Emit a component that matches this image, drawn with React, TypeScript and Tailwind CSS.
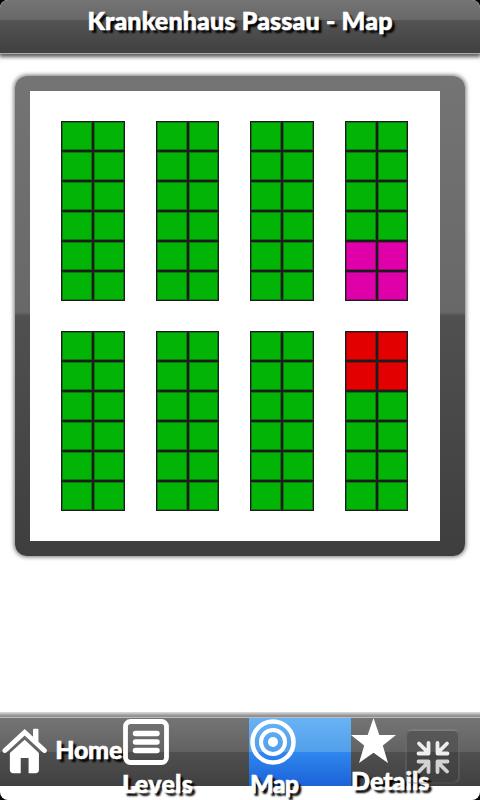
import React from "react";

const label =
  "font-['Lato',sans-serif] font-black text-white whitespace-nowrap [text-shadow:3px_3px_2px_#000] [-webkit-text-stroke:0.6px_#fff]";

const green = "bg-[#02b406]";
const pink = "bg-[#e000aa]";
const red = "bg-[#e20000]";

const plain = [green, green, green, green, green, green];
const blocks = [
  { width: "w-[64px]", rows: plain },
  { width: "w-[63px]", rows: plain },
  { width: "w-[64px]", rows: plain },
  { width: "w-[63px]", rows: [green, green, green, green, pink, pink] },
  { width: "w-[64px]", rows: plain },
  { width: "w-[63px]", rows: plain },
  { width: "w-[64px]", rows: plain },
  { width: "w-[63px]", rows: [red, red, green, green, green, green] },
];

function Block({ width, rows }: { width: string; rows: string[] }) {
  return (
    <div className={`grid h-[180px] grid-cols-2 grid-rows-6 ${width}`}>
      {rows.flatMap((color, i) =>
        [0, 1].map((side) => (
          <div
            key={`${i}-${side}`}
            className={`border border-[#1c1c1c] shadow-[inset_0_0_0_1px_rgba(28,28,28,0.4)] ${color}`}
          />
        ))
      )}
    </div>
  );
}

function HomeIcon() {
  return (
    <svg width="46" height="46" viewBox="0 0 46 46" fill="#fff">
      <path d="M3 22.500 23 4 43 22.500" fill="none" stroke="#fff" strokeWidth="5" strokeLinecap="round" />
      <path d="M31.500 1.500q0-1 1-1h3.500q1 0 1 1V14l-5.500-5zM8 25 23 11.500 37.500 25v17q0 3.500-3.500 3.500H27V30H19v15.500h-7.500Q8 45.500 8 42z" />
    </svg>
  );
}

function LevelsIcon() {
  return (
    <svg width="46" height="46" viewBox="0 0 46 46" fill="none" stroke="#fff" strokeLinecap="round">
      <rect x="2.500" y="2.500" width="41" height="41" rx="5" strokeWidth="4.800" />
      <path d="M12.500 14.500h21.500M12.500 23h21.500M12.500 31.500h21.500" strokeWidth="5.500" />
    </svg>
  );
}

function TargetIcon() {
  return (
    <svg width="46" height="46" viewBox="0 0 46 46" fill="none" stroke="#fff">
      <circle cx="23" cy="23" r="20.500" strokeWidth="4.500" />
      <circle cx="23" cy="23" r="12" strokeWidth="4" />
      <circle cx="23" cy="23" r="5" fill="#fff" stroke="none" />
    </svg>
  );
}

function StarIcon() {
  return (
    <svg width="46" height="46" viewBox="0 0 46 46" fill="#fff">
      <path d="m22.500 0 5.800 17H45L31.800 27.500 37 45 22.500 34.700 8 45 13.200 27.500 0 17h16.700z" />
    </svg>
  );
}

function ShrinkButton() {
  return (
    <div className="flex h-[55px] w-[55px] items-center justify-center rounded-[7px] border-2 border-white/10 bg-[linear-gradient(rgba(0,0,0,0.2),rgba(0,0,0,0.02))]">
      <svg width="34" height="34" viewBox="0 0 34 34" fill="none" strokeWidth="3.800" strokeLinejoin="round" strokeLinecap="round">
        <path d="M3 3.500 11.500 12M12.500 3v10.500H2.500M31 3.500 22.500 12M21.500 3v10.500h10" stroke="#eee" />
        <path d="M3 31.500 11.500 23M12.500 32V21.500H2.500M31 31.500 22.500 23M21.500 32V21.500h10" stroke="#d2d2d2" />
      </svg>
    </div>
  );
}

export default function App() {
  return (
    <div className="h-[800px] w-[480px] overflow-hidden bg-black">
      <div className="flex h-full flex-col overflow-hidden rounded-[8px] bg-white">
        <header className="flex h-[54px] shrink-0 justify-center border-b border-[#aaa] bg-[linear-gradient(#747474_0,#686868_20px,#545454_20px,#404040_53px)] shadow-[0_2px_4px_1px_rgba(0,0,0,0.65)]">
          <h1 className={`h-[40px] text-[25px] leading-[40px] tracking-[0.16px] ${label}`}>
            Krankenhaus Passau - Map
          </h1>
        </header>

        <main className="h-[658px] shrink-0 pl-[15px] pt-[22px]">
          <div className="h-[480px] w-[450px] rounded-[12px] bg-[linear-gradient(#747474_0,#686868_236px,#505050_240px,#3e3e3e_480px)] p-[15px] pr-[25px] shadow-[0_0_4px_1px_rgba(0,0,0,0.55)]">
            <div className="grid h-[450px] w-[410px] grid-cols-[95px_94px_95px_63px] content-start gap-y-[30px] bg-white pl-[31px] pt-[30px]">
              {blocks.map((block, i) => (
                <Block key={i} {...block} />
              ))}
            </div>
          </div>
        </main>

        <div className="h-[5px] shrink-0 bg-[linear-gradient(#ddd_0,#8c8c8c_4px,#999_5px)]" />
        <footer className="flex h-[69px] shrink-0 border-t border-[#bbb] bg-[linear-gradient(#747474_0,#626262_34px,#505050_34px,#404040_68px)]">
          <div className="flex w-[122px] gap-[8px] pl-[2px] pt-[10px]">
            <HomeIcon />
            <span className={`text-[25px] leading-[43px] tracking-[-0.3px] ${label}`}>Home</span>
          </div>
          <div className="w-[127px] pt-[1px]">
            <div className="pl-[1px]">
              <LevelsIcon />
            </div>
            <div className={`text-[25px] leading-[36px] tracking-[0.3px] ${label}`}>Levels</div>
          </div>
          <div className="w-[102px] bg-[linear-gradient(#69b2f4_0,#519feb_34px,#3087ee_34px,#1c62d9_68px)] pl-[1px] pt-[1px]">
            <TargetIcon />
            <div className={`text-[25px] leading-[36px] tracking-[-0.8px] ${label}`}>Map</div>
          </div>
          <div className="relative w-[129px]">
            <StarIcon />
            <div className={`text-[25px] leading-[32px] ${label}`}>Details</div>
            <div className="absolute left-[54px] top-[11px]">
              <ShrinkButton />
            </div>
          </div>
        </footer>
      </div>
    </div>
  );
}
